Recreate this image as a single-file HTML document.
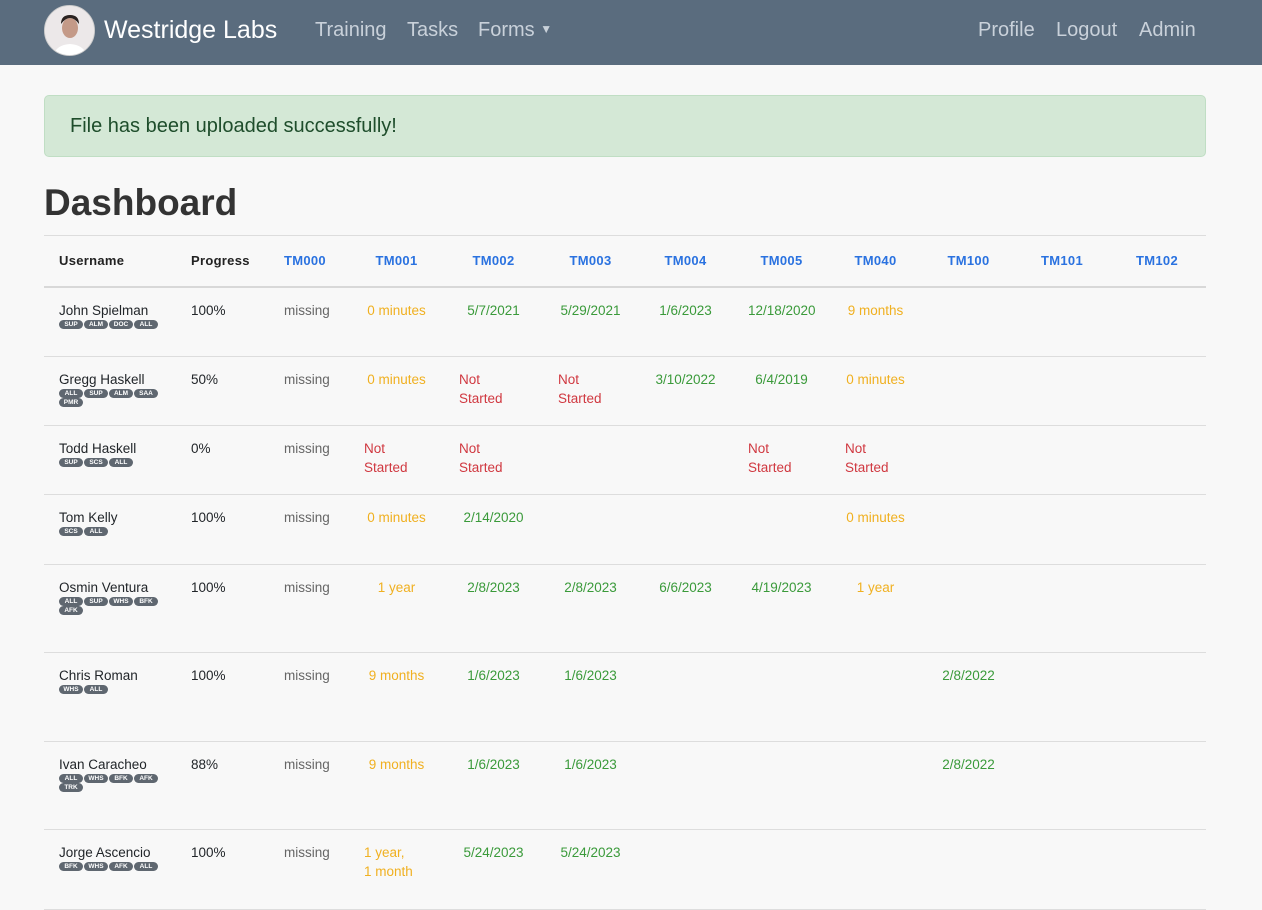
<!DOCTYPE html>
<html><head><meta charset="utf-8"><style>
*{box-sizing:border-box}
body{margin:0;background:#f8f8f8;font-family:"Liberation Sans",Arial,sans-serif;color:#212529;width:1262px;height:897px;overflow:hidden}
.nav{height:65px;background:#5a6c7e;position:relative}
.nav .av{position:absolute;left:44px;top:5px;width:51px;height:51px;border-radius:50%;background:#e9e4e6;border:1px solid #ccc;overflow:hidden}
.nav .brand{position:absolute;left:104px;top:16px;font-size:25px;color:#fff}
.nav a{position:absolute;top:19px;font-size:20px;color:#c9d1da;text-decoration:none}
.alert{position:absolute;left:44px;top:95px;width:1162px;height:62px;background:#d4e8d6;border:1px solid #c0dec4;border-radius:5px;color:#1e4d2b;font-size:20px;padding:19px 25px}
h1{position:absolute;left:44px;top:182px;margin:0;font-size:37px;font-weight:bold;color:#333}
table{position:absolute;left:44px;top:235px;width:1162px;border-collapse:collapse;table-layout:fixed;font-size:13.5px}
th,td{padding:0 15px;vertical-align:top;line-height:19px}
th{height:51px;vertical-align:middle;font-weight:bold;text-align:center;color:#2a72e0;border-top:1px solid #ddd;border-bottom:2px solid #d8d8d8;letter-spacing:.3px;font-size:13px}
th.l{text-align:left;color:#222}
td{border-bottom:1px solid #ddd;padding-top:13px;text-align:center}
td.l{text-align:left}
td.u{padding-right:4px}
.m{color:#666}.o{color:#f0b020}.g{color:#3a9a3a}.r{color:#d03840}
.b{display:inline-block;background:#5f6770;color:#fff;font-size:6.5px;font-weight:bold;line-height:9px;height:9px;width:24px;text-align:center;border-radius:5px;margin-right:1px;vertical-align:top}
.bs{line-height:9px;margin-top:0;width:102px}
</style></head><body>
<div class="nav">
<div class="av"><svg width="51" height="51"><rect width="51" height="51" fill="#ece8e9"/><ellipse cx="25" cy="22" rx="8" ry="10" fill="#c49a88"/><path d="M16 18q9-12 18 0q0-9-9-9q-9 0-9 9z" fill="#2a2220"/><path d="M8 51q2-12 17-13q15 1 17 13z" fill="#fff"/></svg></div>
<div class="brand">Westridge Labs</div>
<a style="left:315px">Training</a><a style="left:407px">Tasks</a><a style="left:478px">Forms <span style="font-size:12px;vertical-align:3px">&#9660;</span></a>
<a style="left:978px">Profile</a><a style="left:1056px">Logout</a><a style="left:1139px">Admin</a>
</div>
<div class="alert">File has been uploaded successfully!</div>
<h1>Dashboard</h1>
<table>
<colgroup><col style="width:132px"><col style="width:93px"><col style="width:80px"><col style="width:95px"><col style="width:99px"><col style="width:95px"><col style="width:95px"><col style="width:97px"><col style="width:91px"><col style="width:95px"><col style="width:92px"><col style="width:98px"></colgroup>
<tr><th class="l">Username</th><th class="l">Progress</th><th class="l" style="color:#2a72e0">TM000</th><th>TM001</th><th>TM002</th><th>TM003</th><th>TM004</th><th>TM005</th><th>TM040</th><th>TM100</th><th>TM101</th><th>TM102</th></tr>
<tr style="height:70px"><td class="l u">John Spielman<div class="bs"><span class="b">SUP</span><span class="b">ALM</span><span class="b">DOC</span><span class="b">ALL</span></div></td><td class="l">100%</td><td class="l m">missing</td><td class="o">0 minutes</td><td class="g">5/7/2021</td><td class="g">5/29/2021</td><td class="g">1/6/2023</td><td class="g">12/18/2020</td><td class="o">9 months</td><td></td><td></td><td></td></tr>
<tr style="height:69px"><td class="l u">Gregg Haskell<div class="bs"><span class="b">ALL</span><span class="b">SUP</span><span class="b">ALM</span><span class="b">SAA</span><span class="b">PMR</span></div></td><td class="l">50%</td><td class="l m">missing</td><td class="o">0 minutes</td><td class="l r">Not<br>Started</td><td class="l r">Not<br>Started</td><td class="g">3/10/2022</td><td class="g">6/4/2019</td><td class="o">0 minutes</td><td></td><td></td><td></td></tr>
<tr style="height:69px"><td class="l u">Todd Haskell<div class="bs"><span class="b">SUP</span><span class="b">SCS</span><span class="b">ALL</span></div></td><td class="l">0%</td><td class="l m">missing</td><td class="l r">Not<br>Started</td><td class="l r">Not<br>Started</td><td></td><td></td><td class="l r">Not<br>Started</td><td class="l r">Not<br>Started</td><td></td><td></td><td></td></tr>
<tr style="height:70px"><td class="l u">Tom Kelly<div class="bs"><span class="b">SCS</span><span class="b">ALL</span></div></td><td class="l">100%</td><td class="l m">missing</td><td class="o">0 minutes</td><td class="g">2/14/2020</td><td></td><td></td><td></td><td class="o">0 minutes</td><td></td><td></td><td></td></tr>
<tr style="height:88px"><td class="l u">Osmin Ventura<div class="bs"><span class="b">ALL</span><span class="b">SUP</span><span class="b">WHS</span><span class="b">BFK</span><span class="b">AFK</span></div></td><td class="l">100%</td><td class="l m">missing</td><td class="o">1 year</td><td class="g">2/8/2023</td><td class="g">2/8/2023</td><td class="g">6/6/2023</td><td class="g">4/19/2023</td><td class="o">1 year</td><td></td><td></td><td></td></tr>
<tr style="height:89px"><td class="l u">Chris Roman<div class="bs"><span class="b">WHS</span><span class="b">ALL</span></div></td><td class="l">100%</td><td class="l m">missing</td><td class="o">9 months</td><td class="g">1/6/2023</td><td class="g">1/6/2023</td><td></td><td></td><td></td><td class="g">2/8/2022</td><td></td><td></td></tr>
<tr style="height:88px"><td class="l u">Ivan Caracheo<div class="bs"><span class="b">ALL</span><span class="b">WHS</span><span class="b">BFK</span><span class="b">AFK</span><span class="b">TRK</span></div></td><td class="l">88%</td><td class="l m">missing</td><td class="o">9 months</td><td class="g">1/6/2023</td><td class="g">1/6/2023</td><td></td><td></td><td></td><td class="g">2/8/2022</td><td></td><td></td></tr>
<tr style="height:80px"><td class="l u">Jorge Ascencio<div class="bs"><span class="b">BFK</span><span class="b">WHS</span><span class="b">AFK</span><span class="b">ALL</span></div></td><td class="l">100%</td><td class="l m">missing</td><td class="l o">1 year,<br>1 month</td><td class="g">5/24/2023</td><td class="g">5/24/2023</td><td></td><td></td><td></td><td></td><td></td><td></td></tr>
</table>
</body></html>
